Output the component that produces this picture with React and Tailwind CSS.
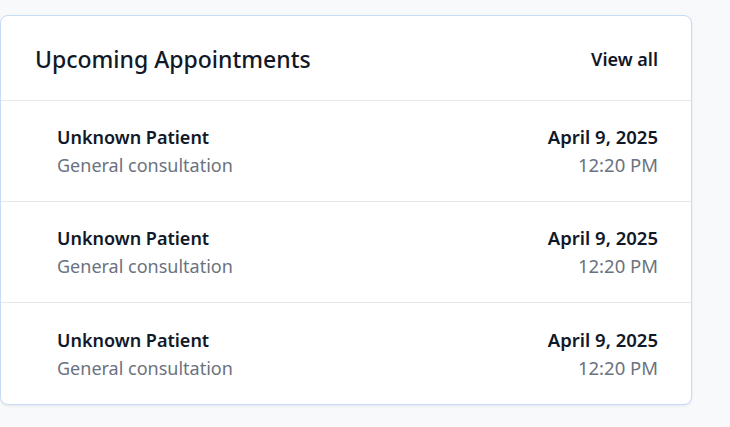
export default function App() {
  const rows = [1, 2, 3];
  return (
    <div className="min-h-[427px] w-[730px] bg-[#f8f9fb] pt-[15px]" style={{ fontFamily: '"Noto Sans", "Open Sans", sans-serif' }}>
      <div className="w-[692px] rounded-lg border border-[#c6dbf6] bg-white shadow-[0_1px_3px_rgba(0,0,0,0.08)]">
        <div className="flex h-[85px] items-center justify-between border-b border-[#e5e7eb] pl-[34px] pr-[33px] pt-[3px]">
          <h2 className="text-[23px] font-medium text-[#111827]">Upcoming Appointments</h2>
          <span className="text-[18px] font-semibold text-[#111827]">View all</span>
        </div>
        {rows.map((r, i) => (
          <div key={r} className={`flex h-[101px] items-center justify-between pl-[56px] pr-[33px] ${i < 2 ? "border-b border-[#e5e7eb]" : ""}`}>
            <div className="flex flex-col">
              <span className="text-[18px] font-semibold leading-[28px] text-[#111827]">Unknown Patient</span>
              <span className="text-[18px] leading-[28px] text-[#6b7280]">General consultation</span>
            </div>
            <div className="flex flex-col items-end">
              <span className="text-[18.5px] font-semibold leading-[28px] text-[#111827]">April 9, 2025</span>
              <span className="text-[18.5px] leading-[28px] text-[#6b7280]">12:20 PM</span>
            </div>
          </div>
        ))}
      </div>
    </div>
  );
}
